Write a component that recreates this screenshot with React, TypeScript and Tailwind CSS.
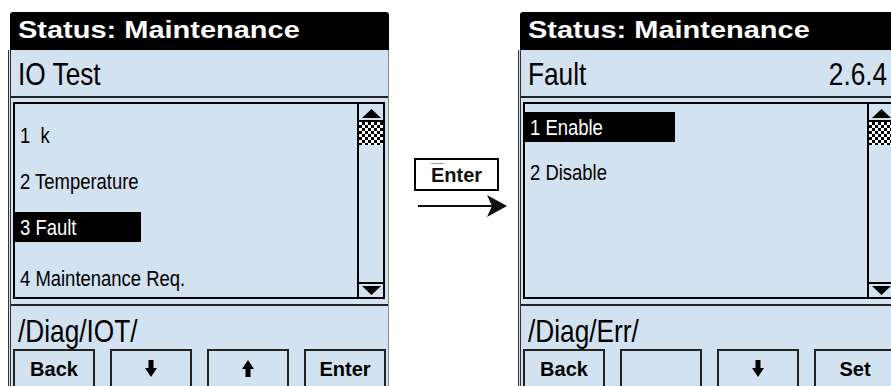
import React from 'react';

type Item = { label: string; selected?: boolean; barW?: string; extra?: string };

const sans = "font-['Liberation_Sans',Arial,sans-serif]";
const bold = `${sans} font-bold`;

// Arial Narrow look: Liberation Sans squeezed horizontally
const Narrow = ({ children, right }: { children: React.ReactNode; right?: boolean }) => (
  <span className={`inline-block whitespace-pre scale-x-[0.82] ${right ? 'origin-right' : 'origin-left'} ${sans}`}>
    {children}
  </span>
);

const ArrowDown = () => (
  <svg width="12" height="17" viewBox="0 0 12 17">
    <rect x="3.5" y="0" width="5" height="9" fill="#000" />
    <polygon points="0,8 12,8 6,17" fill="#000" />
  </svg>
);

const ArrowUp = () => (
  <svg width="12" height="17" viewBox="0 0 12 17">
    <polygon points="0,9 12,9 6,0" fill="#000" />
    <rect x="3.5" y="8" width="5" height="9" fill="#000" />
  </svg>
);

const Scrollbar = () => (
  <div className="w-[26px] border-l-2 border-black flex flex-col">
    <div className="h-[18px] border-b-2 border-black flex items-end justify-center pb-[2px]">
      <svg width="19" height="9" viewBox="0 0 19 9">
        <polygon points="0,9 19,9 9.5,0" fill="#000" />
      </svg>
    </div>
    <div className="h-[23px] bg-[repeating-conic-gradient(#000_0%_25%,#fff_0%_50%)] bg-[length:6px_6px]" />
    <div className="flex-1" />
    <div className="h-[15px] border-t-2 border-black flex items-start justify-center pt-[2px]">
      <svg width="19" height="9" viewBox="0 0 19 9">
        <polygon points="0,0 19,0 9.5,9" fill="#000" />
      </svg>
    </div>
  </div>
);

const Panel = ({
  title,
  version,
  items,
  path,
  buttons,
  listTop,
  listGap,
}: {
  title: string;
  version?: string;
  items: Item[];
  path: string;
  buttons: React.ReactNode[];
  listTop: string;
  listGap: string;
}) => (
  <div className="w-[381px] shrink-0 flex flex-col">
    {/* black status header */}
    <div className="h-[38px] shrink-0 bg-black rounded-t-[3px] ml-[2px] pl-[8px] pt-[7px]">
      <span className={`inline-block origin-left scale-x-[1.26] text-white text-[23px] leading-none ${bold}`}>
        Status: Maintenance
      </span>
    </div>

    <div className="shrink-0 bg-[#d3e2f1] border-l-[3px] border-double border-[#333] border-r border-r-[#888]">
      <div className="h-[48px] border-b-2 border-[#222] flex justify-between pl-[7px] pr-[11px] pt-[8px] text-[32px] leading-none text-black">
        <Narrow>{title}</Narrow>
        {version && <Narrow right>{version}</Narrow>}
      </div>

      <div className="mt-[4px] ml-[2px] mr-[3px] h-[197px] border-2 border-black flex">
        <div className={`flex-1 flex flex-col ${listTop} ${listGap}`}>
          {items.map((it) => (
            <div
              key={it.label}
              className={`h-[30px] leading-[30px] pl-[5px] text-[22.5px] ${it.extra ?? ''} ${
                it.selected ? `bg-black text-white ${it.barW}` : 'text-black'
              }`}
            >
              <Narrow>{it.label}</Narrow>
            </div>
          ))}
        </div>
        <Scrollbar />
      </div>

      <div className="mt-[5px] h-[45px] border-t-2 border-[#222] pl-[7px] pt-[8px] text-[32px] leading-none text-black">
        <Narrow>{path}</Narrow>
      </div>

      <div className="flex gap-[15px] ml-[2px]">
        {buttons.map((b, i) => (
          <div
            key={i}
            className={`w-[82px] h-[42px] shrink-0 border-2 border-[#222] flex justify-center pt-[8px] text-[20px] leading-none text-black ${bold}`}
          >
            {b}
          </div>
        ))}
      </div>
    </div>
  </div>
);

const App: React.FC = () => {
  return (
    <div className="w-[891px] h-[386px] overflow-hidden bg-white flex items-start pt-[12px] pl-[8px]">
      <Panel
        title="IO Test"
        items={[
          { label: '1  k' },
          { label: '2 Temperature' },
          { label: '3 Fault', selected: true, barW: 'w-[126px]' },
          { label: '4 Maintenance Req.', extra: 'mt-[5px]' },
        ]}
        path="/Diag/IOT/"
        buttons={[
          'Back',
          <span className="pt-[1px]"><ArrowDown /></span>,
          <span className="pt-[1px]"><ArrowUp /></span>,
          'Enter',
        ]}
        listTop="pt-[16px]"
        listGap="gap-[16px]"
      />

      {/* transition label + arrow */}
      <div className="w-[129px] shrink-0 flex flex-col">
        <div className={`mt-[146px] ml-[25px] w-[85px] h-[33px] border-2 border-black flex items-center justify-center text-[20px] leading-none text-[#111] ${bold}`}>
          <span className="overline decoration-[#999] decoration-1">E</span>nter
        </div>
        <svg className="mt-[3px] ml-[29px]" width="90" height="24" viewBox="0 0 90 24">
          <line x1="0" y1="12" x2="76" y2="12" stroke="#111" strokeWidth="2" />
          <polygon points="89,12 69,1 74,12 69,23" fill="#111" />
        </svg>
      </div>

      <Panel
        title="Fault"
        version="2.6.4"
        items={[
          { label: '1 Enable', selected: true, barW: 'w-[150px]' },
          { label: '2 Disable' },
        ]}
        path="/Diag/Err/"
        buttons={['Back', '', <span className="pt-[1px]"><ArrowDown /></span>, 'Set']}
        listTop="pt-[8px]"
        listGap="gap-[15px]"
      />
    </div>
  );
};

export default App;
